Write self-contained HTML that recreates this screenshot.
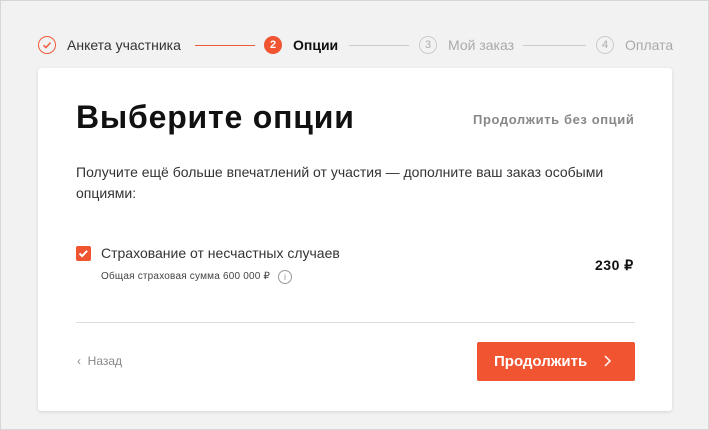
<!DOCTYPE html><html><head><meta charset="utf-8"><style>
*{margin:0;padding:0;box-sizing:border-box}
body{width:709px;height:430px;background:#f2f2f2;font-family:"Liberation Sans",sans-serif;position:relative;overflow:hidden;border:1px solid #d6d6d6}
.a{position:absolute;white-space:nowrap}
.c{position:absolute;width:18px;height:18px;border-radius:50%;font-size:11px;text-align:center;line-height:16px}
.ln{position:absolute;height:1px;top:44px}
.card{position:absolute;left:37px;top:67px;width:634px;height:343px;background:#fff;border-radius:3px;box-shadow:0 1px 3px rgba(0,0,0,.12)}
</style></head><body>
<div class="c" style="left:37px;top:35px;border:1.5px solid #ef5a3a"><svg width="16" height="16" viewBox="0 0 16 16" style="position:absolute;left:0;top:0"><path d="M4.5 8.2l2.4 2.4 4.6-5" fill="none" stroke="#ef5a3a" stroke-width="1.5"/></svg></div>
<div class="a" style="left:66px;top:36px;font-size:14px;color:#333">Анкета участника</div>
<div class="ln" style="left:194px;width:60px;background:#ef5a3a"></div>
<div class="c" style="left:263px;top:35px;background:#f05431;color:#fff;font-weight:bold;line-height:18px">2</div>
<div class="a" style="left:292px;top:36px;font-size:14px;color:#111;font-weight:bold">Опции</div>
<div class="ln" style="left:348px;width:60px;background:#ccc"></div>
<div class="c" style="left:418px;top:35px;border:1px solid #ccc;color:#aaa">3</div>
<div class="a" style="left:447px;top:36px;font-size:14px;color:#aaa">Мой заказ</div>
<div class="ln" style="left:522px;width:63px;background:#ccc"></div>
<div class="c" style="left:595px;top:35px;border:1px solid #ccc;color:#aaa">4</div>
<div class="a" style="left:624px;top:36px;font-size:14px;color:#aaa">Оплата</div>
<div class="card"></div>
<div class="a" style="left:75px;top:98px;font-size:32px;font-weight:bold;color:#111;letter-spacing:0.8px">Выберите опции</div>
<div class="a" style="left:472px;top:111px;font-size:13px;color:#888;font-weight:bold;letter-spacing:0.6px">Продолжить без опций</div>
<div class="a" style="left:75px;top:161px;font-size:14px;color:#333;line-height:21px">Получите ещё больше впечатлений от участия — дополните ваш заказ особыми<br>опциями:</div>
<div class="a" style="left:75px;top:245px;width:15px;height:15px;background:#f05431;border-radius:2px"><svg width="15" height="15"><path d="M3.5 7.5l2.6 2.6 5-5.3" fill="none" stroke="#fff" stroke-width="2"/></svg></div>
<div class="a" style="left:100px;top:244px;font-size:14px;color:#333">Страхование от несчастных случаев</div>
<div class="a" style="left:100px;top:270px;font-size:10px;color:#444;letter-spacing:0.2px">Общая страховая сумма 600 000 ₽</div>
<div class="a" style="left:277px;top:269px;width:14px;height:14px;border:1px solid #999;border-radius:50%;font-size:9px;color:#999;text-align:center;line-height:12px">i</div>
<div class="a" style="left:594px;top:256px;font-size:14px;font-weight:bold;color:#111;letter-spacing:0.5px">230 ₽</div>
<div class="a" style="left:75px;top:321px;width:559px;height:1px;background:#ddd"></div>
<div class="a" style="left:76px;top:353px;font-size:12px;color:#888">‹ &nbsp;Назад</div>
<div class="a" style="left:476px;top:341px;width:158px;height:39px;background:#f05431;border-radius:2px;color:#fff;font-size:15px;font-weight:bold;line-height:39px;padding-left:17px">Продолжить <svg width="10" height="12" style="margin-left:12px;vertical-align:-1px"><path d="M2 1l5 5-5 5" fill="none" stroke="#fff" stroke-width="1.5"/></svg></div>
</body></html>
